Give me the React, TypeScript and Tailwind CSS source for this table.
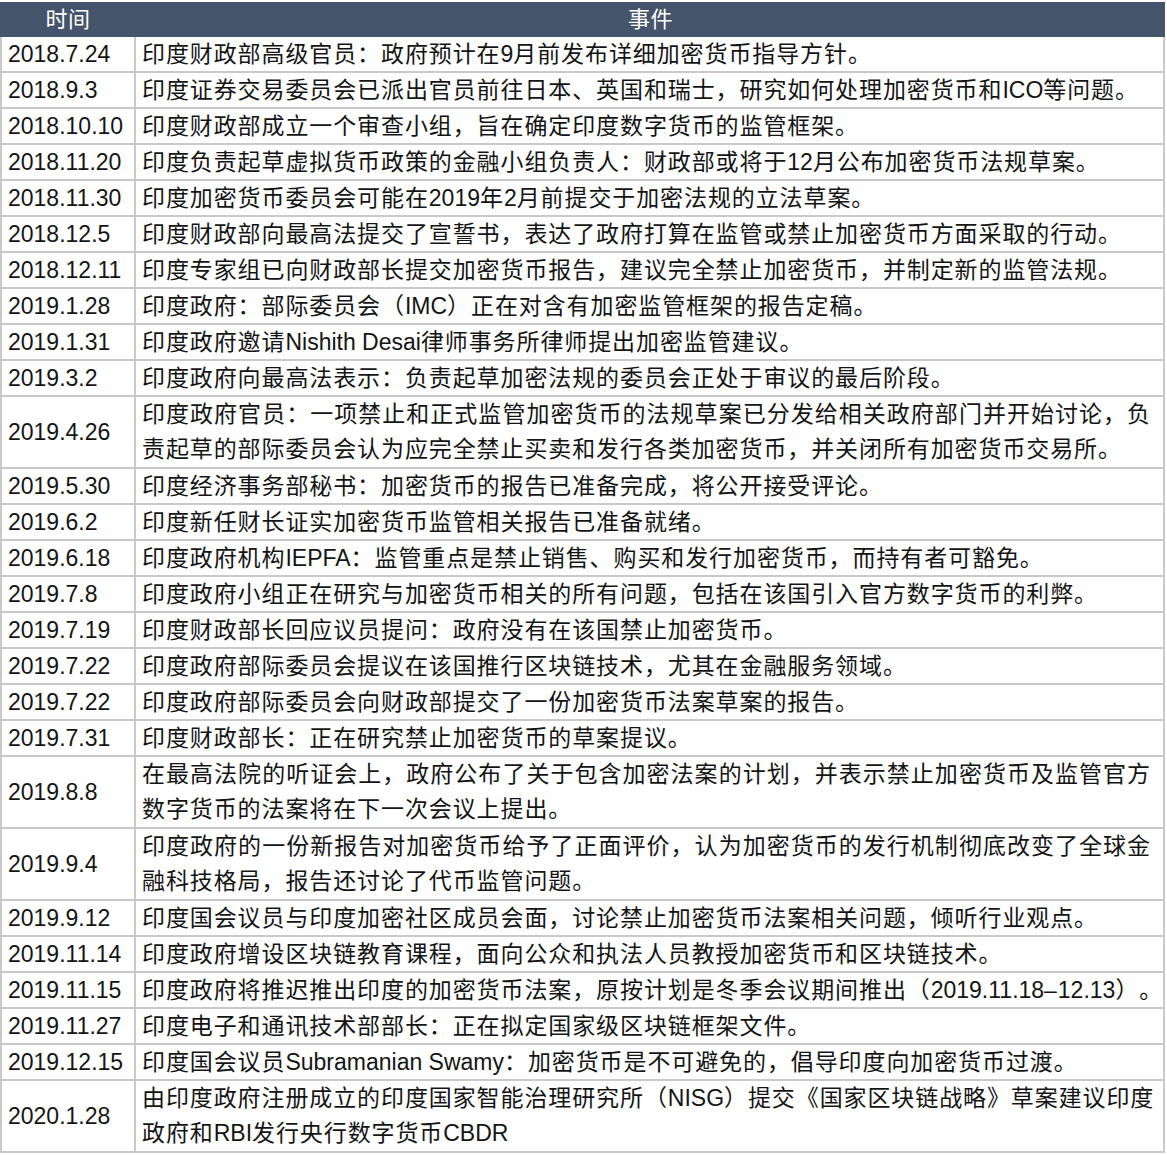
import type { ReactNode } from "react";

const rows: { date: string; lines: ReactNode[] }[] = [
  { date: "2018.7.24", lines: ["印度财政部高级官员：政府预计在9月前发布详细加密货币指导方针。"] },
  { date: "2018.9.3", lines: ["印度证券交易委员会已派出官员前往日本、英国和瑞士，研究如何处理加密货币和ICO等问题。"] },
  { date: "2018.10.10", lines: ["印度财政部成立一个审查小组，旨在确定印度数字货币的监管框架。"] },
  { date: "2018.11.20", lines: ["印度负责起草虚拟货币政策的金融小组负责人：财政部或将于12月公布加密货币法规草案。"] },
  { date: "2018.11.30", lines: ["印度加密货币委员会可能在2019年2月前提交于加密法规的立法草案。"] },
  { date: "2018.12.5", lines: ["印度财政部向最高法提交了宣誓书，表达了政府打算在监管或禁止加密货币方面采取的行动。"] },
  { date: "2018.12.11", lines: ["印度专家组已向财政部长提交加密货币报告，建议完全禁止加密货币，并制定新的监管法规。"] },
  { date: "2019.1.28", lines: ["印度政府：部际委员会（IMC）正在对含有加密监管框架的报告定稿。"] },
  { date: "2019.1.31", lines: ["印度政府邀请Nishith Desai律师事务所律师提出加密监管建议。"] },
  { date: "2019.3.2", lines: ["印度政府向最高法表示：负责起草加密法规的委员会正处于审议的最后阶段。"] },
  {
    date: "2019.4.26",
    lines: [
      "印度政府官员：一项禁止和正式监管加密货币的法规草案已分发给相关政府部门并开始讨论，负",
      "责起草的部际委员会认为应完全禁止买卖和发行各类加密货币，并关闭所有加密货币交易所。",
    ],
  },
  { date: "2019.5.30", lines: ["印度经济事务部秘书：加密货币的报告已准备完成，将公开接受评论。"] },
  { date: "2019.6.2", lines: ["印度新任财长证实加密货币监管相关报告已准备就绪。"] },
  { date: "2019.6.18", lines: ["印度政府机构IEPFA：监管重点是禁止销售、购买和发行加密货币，而持有者可豁免。"] },
  { date: "2019.7.8", lines: ["印度政府小组正在研究与加密货币相关的所有问题，包括在该国引入官方数字货币的利弊。"] },
  { date: "2019.7.19", lines: ["印度财政部长回应议员提问：政府没有在该国禁止加密货币。"] },
  { date: "2019.7.22", lines: ["印度政府部际委员会提议在该国推行区块链技术，尤其在金融服务领域。"] },
  { date: "2019.7.22", lines: ["印度政府部际委员会向财政部提交了一份加密货币法案草案的报告。"] },
  { date: "2019.7.31", lines: ["印度财政部长：正在研究禁止加密货币的草案提议。"] },
  {
    date: "2019.8.8",
    lines: [
      "在最高法院的听证会上，政府公布了关于包含加密法案的计划，并表示禁止加密货币及监管官方",
      "数字货币的法案将在下一次会议上提出。",
    ],
  },
  {
    date: "2019.9.4",
    lines: [
      "印度政府的一份新报告对加密货币给予了正面评价，认为加密货币的发行机制彻底改变了全球金",
      "融科技格局，报告还讨论了代币监管问题。",
    ],
  },
  { date: "2019.9.12", lines: ["印度国会议员与印度加密社区成员会面，讨论禁止加密货币法案相关问题，倾听行业观点。"] },
  { date: "2019.11.14", lines: ["印度政府增设区块链教育课程，面向公众和执法人员教授加密货币和区块链技术。"] },
  { date: "2019.11.15", lines: ["印度政府将推迟推出印度的加密货币法案，原按计划是冬季会议期间推出（2019.11.18–12.13）。"] },
  { date: "2019.11.27", lines: ["印度电子和通讯技术部部长：正在拟定国家级区块链框架文件。"] },
  { date: "2019.12.15", lines: ["印度国会议员Subramanian Swamy：加密货币是不可避免的，倡导印度向加密货币过渡。"] },
  {
    date: "2020.1.28",
    lines: [
      "由印度政府注册成立的印度国家智能治理研究所（NISG）提交《国家区块链战略》草案建议印度",
      "政府和RBI发行央行数字货币CBDR",
    ],
  },
];

// latin runs keep normal spacing, chinese gets a little extra tracking
const Text = ({ value }: { value: ReactNode }) => {
  if (typeof value !== "string") return <>{value}</>;
  return (
    <>
      {value.split(/([A-Za-z0-9. ]+)/).map((part, k) =>
        k % 2 === 1 ? (
          <span key={k} className="tracking-normal">
            {part}
          </span>
        ) : (
          part
        )
      )}
    </>
  );
};

export default function App() {
  return (
    <div className="w-[1167px] h-[1155px] bg-white pt-[2px] text-[23px] text-[#141414] font-['Liberation_Sans','Noto_Sans_CJK_SC',sans-serif] [text-spacing-trim:space-all]">
      <div className="w-[1165px]">
        {/* header */}
        <div className="flex h-[35px] items-center bg-[#44546a] text-[22px] text-white">
          <div className="w-[136px] text-center tracking-[0.5px]">时间</div>
          <div className="flex-1 text-center tracking-[0.5px]">事件</div>
        </div>

        {/* body */}
        <div className="border-x-2 border-[#c9c9c9]">
          {rows.map((row, i) => {
            const double = row.lines.length > 1;
            return (
              <div
                key={i}
                className={`flex border-b-2 border-[#c9c9c9] ${double ? "h-[72px]" : "h-[36px]"}`}
              >
                <div className="flex w-[134px] shrink-0 items-center border-r-2 border-[#c9c9c9] pl-[6px] whitespace-nowrap">
                  {row.date}
                </div>
                <div className="flex min-w-0 flex-1 flex-col justify-center overflow-hidden pl-[6px] pr-[12px] leading-[35px] tracking-[0.9px] whitespace-nowrap">
                  {row.lines.map((line, j) =>
                    double && j === 0 ? (
                      <div key={j} className="text-justify [text-align-last:justify]">
                        <Text value={line} />
                      </div>
                    ) : (
                      <div key={j}>
                        <Text value={line} />
                      </div>
                    )
                  )}
                </div>
              </div>
            );
          })}
        </div>
      </div>
    </div>
  );
}
